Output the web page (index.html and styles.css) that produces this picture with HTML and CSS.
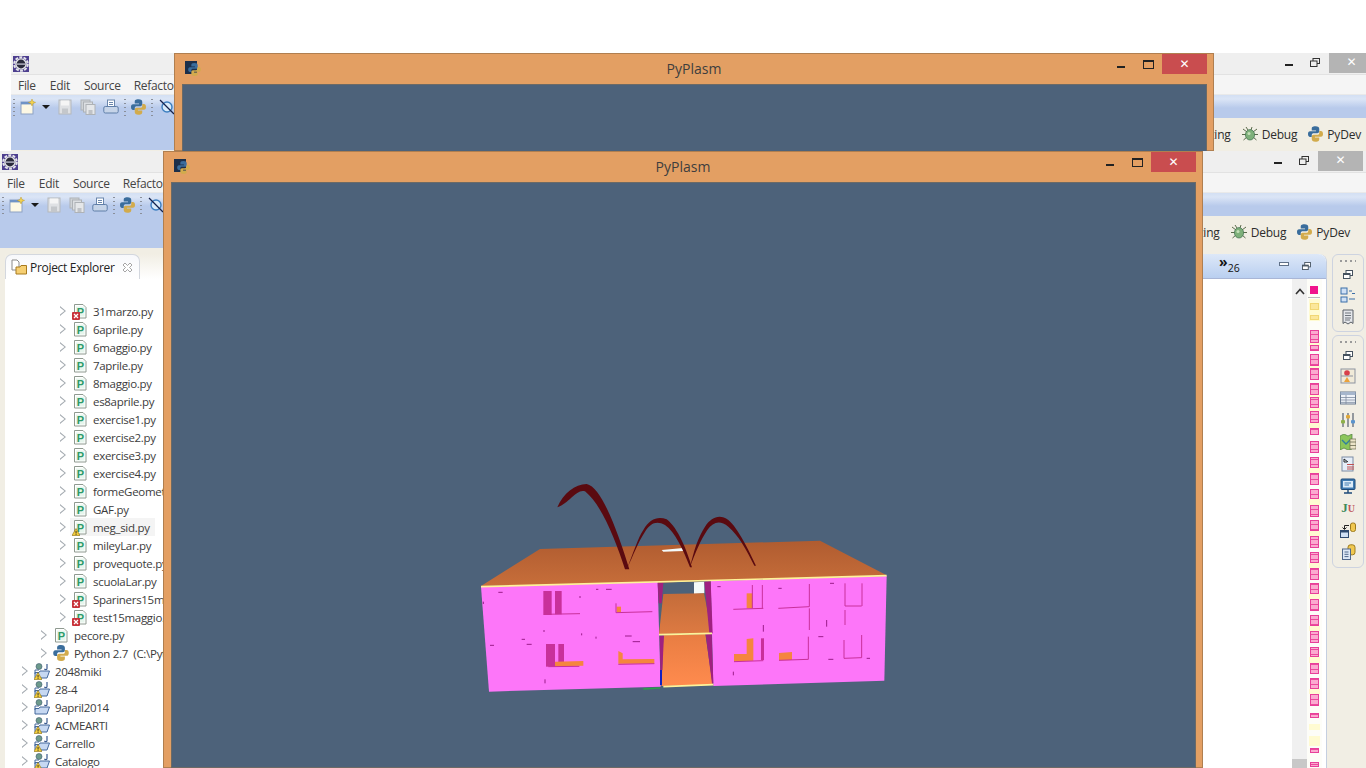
FILE: index.html
```html
<!DOCTYPE html>
<html lang="en">
<head>
<meta charset="utf-8">
<title>PyPlasm</title>
<link rel="stylesheet" href="styles.css">
</head>
<body>
<svg class="defs" width="0" height="0" aria-hidden="true">
  <defs>
    <symbol id="gear" viewBox="0 0 16 16">
      <rect width="16" height="16" fill="#4d3f8f"/>
      <circle cx="8" cy="8" r="6.800" fill="none" stroke="#e4e4ea" stroke-width="2" stroke-dasharray="3 1.300"/>
      <circle cx="8" cy="8" r="5.800" fill="#e6e6ea"/>
      <circle cx="8" cy="8" r="4.400" fill="#2a2a3c"/>
      <rect x="3.600" y="7.400" width="8.800" height="1.400" fill="#b9b9c8"/>
    </symbol>
    <symbol id="py" viewBox="1 1 14 14.4">
      <path fill="#3a6d9c" d="M8 1C5 1 4.500 2 4.500 3.500V5H8.500V5.700H3C1.500 5.700 1 7 1 8.300 1 9.800 1.600 11 3 11H4.500V9.200C4.500 8 5.400 7.500 6.300 7.500H9.700C10.800 7.500 11.500 6.700 11.500 5.700V3.500C11.500 2 10.500 1 8 1Z"/>
      <path fill="#d2ab4c" transform="rotate(180 8 8.2)" d="M8 1C5 1 4.500 2 4.500 3.500V5H8.500V5.700H3C1.500 5.700 1 7 1 8.300 1 9.800 1.600 11 3 11H4.500V9.200C4.500 8 5.400 7.500 6.300 7.500H9.700C10.800 7.500 11.500 6.700 11.500 5.700V3.500C11.500 2 10.500 1 8 1Z"/>
    </symbol>
    <symbol id="plasmico" viewBox="0 0 16 16">
      <rect x="0" y="0" width="12" height="13" fill="#1c2f4a"/>
      <use href="#py" x="3" y="2" width="13" height="13"/>
    </symbol>
    <symbol id="pyfile" viewBox="0 0 16 16">
      <path d="M2.500 1.500H11L14 4.500V15H2.500Z" fill="#fff" stroke="#8f9a90"/>
      <rect x="4" y="3.500" width="8.500" height="10" fill="#e6f5ec"/>
      <text x="8.200" y="12.500" text-anchor="middle" class="pchar">P</text>
    </symbol>
    <symbol id="err" viewBox="0 0 8 8">
      <rect width="8" height="8" rx="1" fill="#c8323a"/>
      <path d="M2 2L6 6M6 2L2 6" stroke="#fff" stroke-width="1.300"/>
    </symbol>
    <symbol id="warn" viewBox="0 0 8 8">
      <path d="M4 .5L8 7.500H0Z" fill="#f5cf3a" stroke="#8a6d10" stroke-width=".6"/>
      <rect x="3.600" y="3" width=".9" height="2.400" fill="#222"/>
      <rect x="3.600" y="5.900" width=".9" height=".9" fill="#222"/>
    </symbol>
    <symbol id="project" viewBox="0 0 16 16">
      <path d="M1 9.500H5L6 8H15.500L13 15H1Z" fill="#c6d8f2" stroke="#45699c"/>
      <path d="M1 11V7H5" fill="none" stroke="#45699c"/>
      <circle cx="5" cy="3.500" r="3" fill="#6d9a8c" stroke="#3c5a70" stroke-width=".6"/>
      <path d="M13 1V5.500C13 7 11 7 10.500 5.800" fill="none" stroke="#3a5a90" stroke-width="1.200"/>
    </symbol>
    <symbol id="newf" viewBox="0 0 16 16">
      <rect x="1" y="3" width="12" height="12" fill="#fdf8e4" stroke="#8da2c4"/>
      <rect x="1" y="3" width="12" height="2.400" fill="#6f93c6"/>
      <path d="M12 0L13 2.500 15.600 3.400 13 4.400 12 7 11 4.400 8.400 3.400 11 2.500Z" fill="#f4d34e" stroke="#b78e1a" stroke-width=".4"/>
    </symbol>
    <symbol id="save" viewBox="0 0 16 16">
      <rect x="2" y="1" width="12" height="14" fill="#dfe1e4" stroke="#b4b7bb"/>
      <rect x="4" y="1.500" width="8" height="5" fill="#f5f5f5"/>
      <rect x="5" y="9.500" width="6" height="5.500" fill="#c4c7cb"/>
    </symbol>
    <symbol id="saveall" viewBox="0 0 16 16">
      <rect x="1" y="1" width="9" height="10" fill="#cfd3d7" stroke="#aeb2b6"/>
      <rect x="3.500" y="3" width="9" height="10" fill="#dcdfe2" stroke="#aeb2b6"/>
      <rect x="6" y="5.500" width="9" height="10" fill="#e5e7e9" stroke="#aeb2b6"/>
      <rect x="8.500" y="11" width="4" height="4" fill="#bfc2c6"/>
    </symbol>
    <symbol id="print" viewBox="0 0 16 16">
      <rect x="4.500" y="1" width="7" height="7" fill="#fff" stroke="#6a86ac"/>
      <path d="M6 3.500H10M6 5.500H10" stroke="#6a86ac"/>
      <rect x=".8" y="7.500" width="14.400" height="6.500" rx="1.500" fill="#c6d4e8" stroke="#5f7ea8"/>
    </symbol>
    <symbol id="skip" viewBox="0 0 16 16">
      <circle cx="8" cy="8" r="5" fill="#d8ebfa" stroke="#3d7fc0" stroke-width="1.400"/>
      <path d="M1 1L15 15" stroke="#14214a" stroke-width="1.300"/>
    </symbol>
    <symbol id="bug" viewBox="0 0 16 16">
      <path d="M1 3L5 6M15 3L11 6M0 8.500H4M16 8.500H12M1.500 14L5 11M14.500 14L11 11M4 1L6 4M10 1L9 4" stroke="#5a6a4a"/>
      <ellipse cx="8" cy="8.800" rx="4.600" ry="5.200" fill="#7eb07a" stroke="#3f6e4f" stroke-width=".7"/>
      <circle cx="7" cy="7.500" r="1.500" fill="#c4e0b8"/>
    </symbol>
    <symbol id="restore" viewBox="0 0 10 9">
      <rect x="3" y=".5" width="6.500" height="5" fill="#fff" stroke="#45525f"/>
      <rect x=".5" y="3.500" width="6.500" height="5" fill="#fff" stroke="#45525f"/>
      <rect x=".5" y="3.500" width="6.500" height="1.500" fill="#45525f"/>
    </symbol>
    <symbol id="outline" viewBox="0 0 16 16">
      <rect x="1" y="1" width="6" height="6" fill="#cfe0f5" stroke="#3b6fa8"/>
      <rect x="1" y="10" width="6" height="5" fill="#cfe0f5" stroke="#3b6fa8"/>
      <path d="M9 4H12M9 12H15M12 6.500H15" stroke="#3b6fa8" stroke-width="1.200"/>
    </symbol>
    <symbol id="doc" viewBox="0 0 16 16">
      <path d="M3 1H13V14.500L11 13 8 15 5 13 3 14.500Z" fill="#e4e6ea" stroke="#5b6168"/>
      <path d="M5 4H11M5 6.500H11M5 9H11M5 11H10" stroke="#6e757d"/>
    </symbol>
    <symbol id="bp" viewBox="0 0 16 16">
      <rect x="1" y="1" width="14" height="14" fill="#f0ead8" stroke="#8d93a0"/>
      <circle cx="7" cy="5" r="2.800" fill="#d8404a"/>
      <path d="M7 9L10 14H4Z" fill="#eba23c"/>
      <path d="M1 8H13" stroke="#8d93a0"/>
    </symbol>
    <symbol id="table" viewBox="0 0 16 16">
      <rect x=".5" y="2" width="15" height="12" fill="#eef2f8" stroke="#6b7b90"/>
      <rect x=".5" y="2" width="15" height="3" fill="#a6b6cc"/>
      <path d="M1 7.500H15M1 10H15M1 12.400H15M6 5V14" stroke="#7d8ca0" stroke-width=".8"/>
    </symbol>
    <symbol id="sliders" viewBox="0 0 16 16">
      <path d="M3 1V15M8 1V15M13 1V15" stroke="#556070" stroke-width="1.200"/>
      <rect x="1" y="8" width="4" height="3.400" rx="1" fill="#8eb04a"/>
      <rect x="6" y="3" width="4" height="3.400" rx="1" fill="#e0a83a"/>
      <rect x="11" y="8" width="4" height="3.400" rx="1" fill="#5b94cc"/>
    </symbol>
    <symbol id="map" viewBox="0 0 16 16">
      <path d="M0 2L4 0 8 2 12 0V15L8 16 4 14 0 16Z" fill="#8cc65a" stroke="#4c7a3c" stroke-width=".7"/>
      <path d="M2 6L6 10 10 6" stroke="#2f7fa0" fill="none" stroke-width="1.400"/>
      <rect x="10" y="5" width="6" height="10" fill="#ece4c8" stroke="#6a6a50" stroke-width=".7"/>
      <path d="M10 8H16M10 11.500H16" stroke="#6a6a50" stroke-width=".8"/>
    </symbol>
    <symbol id="hier" viewBox="0 0 16 16">
      <rect x="2" y="1" width="11" height="14" fill="#e6eef8" stroke="#7c8ca4"/>
      <path d="M4 3L8 6M4 3V6H7" stroke="#222" fill="none"/>
      <path d="M7 8.500H14M7 11H14M7 13H14" stroke="#c05050"/>
    </symbol>
    <symbol id="monitor" viewBox="0 0 16 16">
      <rect x="1" y="1" width="14" height="10.500" rx="1" fill="#3f7ab0" stroke="#1d4a78"/>
      <rect x="3" y="3" width="10" height="6.500" fill="#dcecf8"/>
      <path d="M4.500 5H11M4.500 7H9" stroke="#3f7ab0"/>
      <path d="M4 15H12M8 11.500V15" stroke="#1d4a78" stroke-width="1.400"/>
    </symbol>
    <symbol id="dbarrow" viewBox="0 0 16 16">
      <rect x="10.500" y="1" width="5" height="8.500" rx="2" fill="#f0c850" stroke="#9c7a1c"/>
      <path d="M9 3.500H4.500V7M2.500 5.500L4.500 7.500 6.500 5.500" stroke="#222" fill="none"/>
      <rect x=".5" y="8.500" width="8" height="7" fill="#cfe0f5" stroke="#2e4a70"/>
      <rect x=".5" y="8.500" width="8" height="2" fill="#2e4a70"/>
    </symbol>
    <symbol id="dbdoc" viewBox="0 0 16 16">
      <rect x="8" y=".8" width="7" height="10" rx="2.500" fill="#f0c850" stroke="#9c7a1c"/>
      <rect x="2.500" y="5" width="8" height="10.500" fill="#dde8f6" stroke="#50688c"/>
      <path d="M4.500 8H8.500M4.500 10.300H8.500M4.500 12.600H8.500" stroke="#50688c"/>
    </symbol>
    <pattern id="stripes" width="4" height="5" patternUnits="userSpaceOnUse">
      <rect width="4" height="5" fill="#fbaacf"/>
      <rect y="4" width="4" height="1" fill="#ec4a9d"/>
    </pattern>
  </defs>
</svg>

<section class="eclipse eclipse-back">
  <header class="ec-title">
    <svg class="ec-logo"><use href="#gear"/></svg>
    <span class="ec-min"></span>
    <svg class="ec-restore" viewBox="0 0 10 9"><rect x="3" y=".5" width="6.500" height="5" fill="none" stroke="#333"/><rect x=".5" y="3" width="6.500" height="5.500" fill="#efefef" stroke="#333"/></svg>
    <span class="ec-close">✕</span>
  </header>
  <nav class="ec-menu"><span>File</span><span>Edit</span><span>Source</span><span>Refactor</span></nav>
  <div class="ec-tools">
    <div class="tool-left">
      <i class="grip"></i>
      <svg class="ti first"><use href="#newf"/></svg><i class="caret"></i>
      <svg class="ti s1"><use href="#save"/></svg><svg class="ti s2"><use href="#saveall"/></svg><svg class="ti s2"><use href="#print"/></svg>
      <i class="grip g2"></i><svg class="ti s3 tpy"><use href="#py"/></svg><i class="grip g3"></i><svg class="ti s4"><use href="#skip"/></svg>
    </div>
    <div class="tool-right">
      <div class="stripe"></div>
      <div class="persp">
        <span class="p-hidden">Team Synchronizing</span>
        <svg class="pi"><use href="#bug"/></svg><span class="p-name">Debug</span>
        <svg class="pi ppy"><use href="#py"/></svg><span class="p-name">PyDev</span>
      </div>
    </div>
  </div>
</section>

<section class="plasm plasm-back">
  <header class="pl-title">
    <svg class="pl-ico"><use href="#plasmico"/></svg>
    <span class="pl-name">PyPlasm</span>
    <span class="pl-min"></span><span class="pl-max"></span><span class="pl-close">✕</span>
  </header>
  <div class="pl-canvas"></div>
</section>

<section class="eclipse eclipse-front">
  <header class="ec-title">
    <svg class="ec-logo"><use href="#gear"/></svg>
    <span class="ec-min"></span>
    <svg class="ec-restore" viewBox="0 0 10 9"><rect x="3" y=".5" width="6.500" height="5" fill="none" stroke="#333"/><rect x=".5" y="3" width="6.500" height="5.500" fill="#efefef" stroke="#333"/></svg>
    <span class="ec-close">✕</span>
  </header>
  <nav class="ec-menu"><span>File</span><span>Edit</span><span>Source</span><span>Refactor</span></nav>
  <div class="ec-tools">
    <div class="tool-left">
      <i class="grip"></i>
      <svg class="ti first"><use href="#newf"/></svg><i class="caret"></i>
      <svg class="ti s1"><use href="#save"/></svg><svg class="ti s2"><use href="#saveall"/></svg><svg class="ti s2"><use href="#print"/></svg>
      <i class="grip g2"></i><svg class="ti s3 tpy"><use href="#py"/></svg><i class="grip g3"></i><svg class="ti s4"><use href="#skip"/></svg>
    </div>
    <div class="tool-right">
      <div class="stripe"></div>
      <div class="persp">
        <span class="p-hidden">Team Synchronizing</span>
        <svg class="pi"><use href="#bug"/></svg><span class="p-name">Debug</span>
        <svg class="pi ppy"><use href="#py"/></svg><span class="p-name">PyDev</span>
      </div>
    </div>
  </div>
  <div class="workbench">
    <div class="explorer">
      <div class="ex-head">
        <div class="ex-tab">
          <svg class="tab-ico" viewBox="0 0 16 16"><path d="M1 1H6L8 3V11H1Z" fill="#fff" stroke="#8a8a8a"/><path d="M5 8H9L10 6.500H15.500V15H5Z" fill="#f6cf72" stroke="#a77a1e"/></svg>
          <span>Project Explorer</span>
          <svg class="tab-x" viewBox="0 0 11 11"><path d="M1 3L3 1 5.500 3.500 8 1 10 3 7.500 5.500 10 8 8 10 5.500 7.500 3 10 1 8 3.500 5.500Z" fill="#fff" stroke="#8f8f8f" stroke-width=".8"/></svg>
        </div>
      </div>
      <ul class="tree">
        <li class="row l3"><i class="arrow"></i><span class="ic"><svg><use href="#pyfile"/></svg><svg class="badge"><use href="#err"/></svg></span><span>31marzo.py</span></li>
        <li class="row l3"><i class="arrow"></i><span class="ic"><svg><use href="#pyfile"/></svg></span><span>6aprile.py</span></li>
        <li class="row l3"><i class="arrow"></i><span class="ic"><svg><use href="#pyfile"/></svg></span><span>6maggio.py</span></li>
        <li class="row l3"><i class="arrow"></i><span class="ic"><svg><use href="#pyfile"/></svg></span><span>7aprile.py</span></li>
        <li class="row l3"><i class="arrow"></i><span class="ic"><svg><use href="#pyfile"/></svg></span><span>8maggio.py</span></li>
        <li class="row l3"><i class="arrow"></i><span class="ic"><svg><use href="#pyfile"/></svg></span><span>es8aprile.py</span></li>
        <li class="row l3"><i class="arrow"></i><span class="ic"><svg><use href="#pyfile"/></svg></span><span>exercise1.py</span></li>
        <li class="row l3"><i class="arrow"></i><span class="ic"><svg><use href="#pyfile"/></svg></span><span>exercise2.py</span></li>
        <li class="row l3"><i class="arrow"></i><span class="ic"><svg><use href="#pyfile"/></svg></span><span>exercise3.py</span></li>
        <li class="row l3"><i class="arrow"></i><span class="ic"><svg><use href="#pyfile"/></svg></span><span>exercise4.py</span></li>
        <li class="row l3"><i class="arrow"></i><span class="ic"><svg><use href="#pyfile"/></svg></span><span>formeGeometriche.py</span></li>
        <li class="row l3"><i class="arrow"></i><span class="ic"><svg><use href="#pyfile"/></svg></span><span>GAF.py</span></li>
        <li class="row l3 sel"><i class="arrow"></i><span class="ic"><svg><use href="#pyfile"/></svg><svg class="badge"><use href="#warn"/></svg></span><span>meg_sid.py</span></li>
        <li class="row l3"><i class="arrow"></i><span class="ic"><svg><use href="#pyfile"/></svg></span><span>mileyLar.py</span></li>
        <li class="row l3"><i class="arrow"></i><span class="ic"><svg><use href="#pyfile"/></svg></span><span>provequote.py</span></li>
        <li class="row l3"><i class="arrow"></i><span class="ic"><svg><use href="#pyfile"/></svg></span><span>scuolaLar.py</span></li>
        <li class="row l3"><i class="arrow"></i><span class="ic"><svg><use href="#pyfile"/></svg><svg class="badge"><use href="#err"/></svg></span><span>Spariners15maggio.py</span></li>
        <li class="row l3"><i class="arrow"></i><span class="ic"><svg><use href="#pyfile"/></svg><svg class="badge"><use href="#err"/></svg></span><span>test15maggio.py</span></li>
        <li class="row l2"><i class="arrow"></i><span class="ic"><svg><use href="#pyfile"/></svg></span><span>pecore.py</span></li>
        <li class="row l2"><i class="arrow"></i><span class="ic"><svg><use href="#py"/></svg></span><span>Python 2.7  (C:\Python27\python.exe)</span></li>
        <li class="row l1"><i class="arrow"></i><span class="ic"><svg><use href="#project"/></svg><svg class="badge"><use href="#warn"/></svg></span><span>2048miki</span></li>
        <li class="row l1"><i class="arrow"></i><span class="ic"><svg><use href="#project"/></svg><svg class="badge"><use href="#warn"/></svg></span><span>28-4</span></li>
        <li class="row l1"><i class="arrow"></i><span class="ic"><svg><use href="#project"/></svg></span><span>9april2014</span></li>
        <li class="row l1"><i class="arrow"></i><span class="ic"><svg><use href="#project"/></svg><svg class="badge"><use href="#warn"/></svg></span><span>ACMEARTI</span></li>
        <li class="row l1"><i class="arrow"></i><span class="ic"><svg><use href="#project"/></svg><svg class="badge"><use href="#warn"/></svg></span><span>Carrello</span></li>
        <li class="row l1"><i class="arrow"></i><span class="ic"><svg><use href="#project"/></svg><svg class="badge"><use href="#warn"/></svg></span><span>Catalogo</span></li>
      </ul>
    </div>
    <div class="editor">
      <div class="ed-head">
        <span class="more"><b>»</b><sub>26</sub></span>
        <i class="ed-min"></i>
        <svg class="ed-restore"><use href="#restore"/></svg>
      </div>
      <div class="ed-body">
        <div class="ed-text"></div>
        <svg class="ruler" viewBox="1292 279 30 489">
          <rect x="1292" y="279" width="15" height="489" fill="#f0f0f0"/>
          <rect x="1307" y="279" width="15" height="489" fill="#fdfdf8"/>
          <path d="M1296 294L1300 289.500 1304 294" fill="none" stroke="#333" stroke-width="1.600"/>
          <rect x="1310" y="286" width="8" height="8" fill="#f0148c"/>
          <rect x="1308" y="297" width="12" height="1" fill="#bbb"/>
          <g class="pale">
            <rect x="1309" y="299" width="11" height="22"/><rect x="1309" y="343" width="11" height="3"/><rect x="1309" y="366" width="11" height="2"/><rect x="1309" y="395" width="11" height="3"/><rect x="1309" y="408" width="11" height="3"/><rect x="1309" y="423" width="11" height="5"/><rect x="1309" y="468" width="11" height="5"/><rect x="1309" y="499" width="11" height="6"/><rect x="1309" y="531" width="11" height="5"/><rect x="1309" y="563" width="11" height="5"/><rect x="1309" y="594" width="11" height="5"/><rect x="1309" y="626" width="11" height="5"/><rect x="1309" y="657" width="11" height="6"/><rect x="1309" y="689" width="11" height="5"/><rect x="1309" y="724" width="11" height="6"/><rect x="1309" y="736" width="11" height="10"/>
          </g>
          <rect class="yel" x="1310.500" y="303.500" width="8" height="6"/>
          <rect class="yel" x="1310.500" y="315.500" width="8" height="4"/>
          <g class="mark">
            <rect x="1310.500" y="330.500" width="8" height="12"/><rect x="1310.500" y="345.500" width="8" height="5"/><rect x="1310.500" y="354.500" width="8" height="11"/><rect x="1310.500" y="368.500" width="8" height="11"/><rect x="1310.500" y="383.500" width="8" height="11"/><rect x="1310.500" y="397.500" width="8" height="10"/><rect x="1310.500" y="411.500" width="8" height="11"/><rect x="1310.500" y="428.500" width="8" height="6"/><rect x="1310.500" y="441.500" width="8" height="11"/><rect x="1310.500" y="457.500" width="8" height="10"/><rect x="1310.500" y="473.500" width="8" height="11"/><rect x="1310.500" y="489.500" width="8" height="9"/><rect x="1310.500" y="505.500" width="8" height="11"/><rect x="1310.500" y="520.500" width="8" height="10"/><rect x="1310.500" y="536.500" width="8" height="11"/><rect x="1310.500" y="552.500" width="8" height="10"/><rect x="1310.500" y="568.500" width="8" height="11"/><rect x="1310.500" y="583.500" width="8" height="10"/><rect x="1310.500" y="599.500" width="8" height="11"/><rect x="1310.500" y="615.500" width="8" height="10"/><rect x="1310.500" y="631.500" width="8" height="11"/><rect x="1310.500" y="647.500" width="8" height="9"/><rect x="1310.500" y="663.500" width="8" height="10"/><rect x="1310.500" y="678.500" width="8" height="10"/><rect x="1310.500" y="694.500" width="8" height="11"/><rect x="1310.500" y="713.500" width="8" height="4"/><rect x="1310.500" y="748.500" width="8" height="4"/><rect x="1310.500" y="762.500" width="8" height="4"/>
          </g>
          <rect x="1292" y="759" width="15" height="9" fill="#c8c8c8"/>
        </svg>
      </div>
    </div>
    <aside class="trim">
      <div class="trim-box">
        <i class="dots"></i>
        <svg class="restore-sm"><use href="#restore"/></svg>
        <svg class="tr"><use href="#outline"/></svg>
        <svg class="tr"><use href="#doc"/></svg>
      </div>
      <div class="trim-box">
        <i class="dots"></i>
        <svg class="restore-sm"><use href="#restore"/></svg>
        <svg class="tr"><use href="#bp"/></svg>
        <svg class="tr"><use href="#table"/></svg>
        <svg class="tr"><use href="#sliders"/></svg>
        <svg class="tr"><use href="#map"/></svg>
        <svg class="tr"><use href="#hier"/></svg>
        <svg class="tr"><use href="#monitor"/></svg>
        <span class="tr junit">J<em>U</em></span>
        <svg class="tr"><use href="#dbarrow"/></svg>
        <svg class="tr"><use href="#dbdoc"/></svg>
      </div>
    </aside>
  </div>
</section>

<section class="plasm plasm-front">
  <header class="pl-title">
    <svg class="pl-ico"><use href="#plasmico"/></svg>
    <span class="pl-name">PyPlasm</span>
    <span class="pl-min"></span><span class="pl-max"></span><span class="pl-close">✕</span>
  </header>
  <div class="pl-canvas">
    <svg class="scene" viewBox="0 0 1290 690">
      <defs>
        <linearGradient id="roof" x1="0" y1="0" x2="0" y2="1"><stop offset="0" stop-color="#b05c30"/><stop offset="1" stop-color="#c76e3a"/></linearGradient>
        <linearGradient id="floor1" x1="0" y1="0" x2="0" y2="1"><stop offset="0" stop-color="#c46c3a"/><stop offset="1" stop-color="#dd7a42"/></linearGradient>
        <linearGradient id="floor2" x1="0" y1="0" x2="0" y2="1"><stop offset="0" stop-color="#e87d42"/><stop offset="1" stop-color="#ff8b4e"/></linearGradient>
      </defs>
      <polygon points="33,348 210,237 1050,212 1250,316 722,332 565,338" fill="url(#roof)"/>
      <polygon points="575,240 640,234 642,243 580,245" fill="#f4fafa"/>
      <polygon points="33,350 563,336 572,650 57,665" fill="#fd76f9"/>
      <polygon points="722,333 1250,318 1243,632 730,648" fill="#fd76f9"/>
      <polygon points="672,337 703,335 703,370 672,372" fill="#f4fafa"/>
      <polygon points="580,372 702,370 726,490 567,492" fill="url(#floor1)"/>
      <polygon points="580,496 706,492 728,645 575,648" fill="url(#floor2)"/>
      <polygon points="563,338 580,338 575,400 566,400" fill="#a02080"/>
      <polygon points="703,335 722,333 728,490 718,490" fill="#a02080"/>
      <polygon points="569,497 582,496 577,600 571,600" fill="#a02080"/>
      <polygon points="707,492 725,490 730,640 726,640" fill="#a02080"/>
      <rect x="570" y="600" width="6" height="45" fill="#1420c0"/>
      <path d="M33 350L1250 317" stroke="#fdf39a" stroke-width="5"/>
      <path d="M567 494L726 490M580 650L730 644" stroke="#fdf39a" stroke-width="5"/>
      <path d="M520 657L570 654" stroke="#2ea048" stroke-width="4"/>
      <g class="room">
        <rect x="220" y="363" width="25" height="72"/><rect x="255" y="363" width="20" height="70"/>
        <rect x="228" y="522" width="27" height="68"/><rect x="265" y="522" width="17" height="63"/>
        <polygon points="873,505 882,505 882,570 873,570"/>
      </g>
      <g class="orange">
        <rect x="440" y="410" width="13" height="17"/>
        <rect x="830" y="370" width="18" height="45"/>
        <polygon points="255,575 340,573 340,587 255,589"/>
        <polygon points="445,543 458,550 458,568 553,567 553,581 445,581"/>
        <polygon points="830,507 850,505 850,572 792,574 792,552 830,552"/>
        <polygon points="927,549 966,546 966,570 927,571"/>
      </g>
      <path class="line" d="M222 433L330 431M438 400V428L547 425M790 418L880 415M847 345V415M877 345V415M925 415L1018 410M1018 342V410M1125 340V408L1175 408M1176 340V408M792 575L880 572M927 571L1015 568M1015 500V568M1122 510V565L1175 563M1175 495V563M235 590L328 589M445 583L553 581M1018 415V480M1125 420V465"/>
      <path class="specks" d="M85 367H98M155 508H165M170 523H185M60 526H72M465 498H485M488 515H510M408 358H425M330 378V384M378 358H385M40 395V402M225 628V640M790 605V616M880 465V485M1070 450V470M1045 500H1060M1075 568H1090M1190 565H1200M1080 340H1092M742 350H752M925 355H935M335 490V496M378 500V506M222 480V486"/>
      <g class="arch">
        <path d="M262 112C280 70 315 42 350 42 395 50 445 190 478 298L465 298C435 205 395 105 345 64 320 55 300 98 262 112Z"/>
        <path d="M470 298C490 250 505 200 520 180 540 145 565 138 590 148 625 175 650 240 666 292L660 292C640 240 615 185 585 165 560 150 540 160 525 185 505 215 490 255 470 298Z"/>
        <path d="M660 292C672 240 685 200 705 170 725 140 750 132 775 150 805 175 838 245 858 287L853 287C830 240 805 195 775 170 750 150 730 155 712 180 692 210 675 250 660 292Z"/>
      </g>
    </svg>
  </div>
</section>
</body>
</html>
```

FILE: styles.css
```css
* { box-sizing: border-box; }
html, body { margin: 0; padding: 0; }
body {
  position: relative;
  width: 1366px;
  height: 768px;
  overflow: hidden;
  background: #fff;
  font-family: "Open Sans", "Noto Sans", sans-serif;
  font-size: 11.5px;
  letter-spacing: -.3px;
  color: #333;
}
.defs { position: absolute; }
i { display: block; font-style: normal; }
svg { display: block; }

/* desktop windows */
.eclipse { position: absolute; width: 1366px; height: 617px; background: #f1eee4; }
.eclipse-back { left: 11px; top: 53px; height: 98px; }
.eclipse-front { left: 0; top: 151px; }
.plasm { position: absolute; width: 1040px; background: #e39f63; box-shadow: inset 0 0 0 1px #b07f50; }
.plasm-back { left: 174px; top: 53px; height: 98px; }
.plasm-front { left: 163px; top: 151px; height: 617px; }

/* eclipse chrome */
.ec-title { display: flex; align-items: flex-start; height: 22px; background: #efefef; border-bottom: 1px solid #e2e2e2; }
.ec-logo { width: 16px; height: 16px; margin: 3px 0 0 2px; }
.ec-min { width: 8px; height: 2px; background: #222; margin: 11px 0 0 auto; }
.ec-restore { width: 10px; height: 9px; margin: 5px 0 0 17px; }
.ec-close { width: 45px; height: 20px; margin: 0 3px 0 9px; background: #b4b4b4; color: #fff; font-size: 12px; line-height: 19px; text-align: center; font-family: "DejaVu Sans", sans-serif; }
.ec-menu { display: flex; height: 20px; padding: 1px 0 0 7px; background: #f5f5f5; border-bottom: 1px solid #e9e9e9; font-size: 12px; line-height: 20px; color: #444; white-space: nowrap; }
.ec-menu span { margin-right: 14px; }
.ec-menu span:nth-child(3) { margin-right: 13px; }
.ec-tools { display: flex; height: 55px; }
.tool-left { display: flex; align-items: flex-start; width: 600px; padding-top: 4px; background: linear-gradient(#d3dff3 0, #dbe5f6 4px, #b8caeb 13px); }
.tool-right { flex: 1; display: flex; flex-direction: column; }
.stripe { height: 23px; background: linear-gradient(#d3dff3 0, #dbe5f6 4px, #b8caeb 13px); }
.persp { flex: 1; display: flex; justify-content: flex-end; align-items: center; gap: 4px; padding-right: 16px; background: #f1eee4; font-size: 12px; color: #2c2c2c; white-space: nowrap; letter-spacing: -.2px; }
.pi { width: 16px; height: 16px; margin-left: 7px; }
.ppy { width: 15px; }
.grip { width: 2px; height: 17px; margin: 0 0 0 2px; background: repeating-linear-gradient(#8a8f9a 0 1px, transparent 1px 4px); }
.ti { width: 16px; height: 16px; }
.ti.first { margin-left: 5px; }
.caret { width: 0; height: 0; margin: 6px 0 0 6px; border: 4px solid transparent; border-top: 4px solid #1a1a1a; border-bottom: 0; }
.s1 { margin-left: 7px; }
.s2 { margin-left: 7px; }
.g2 { margin-left: 5px; }
.s3 { margin-left: 5px; }
.tpy { width: 15px; }
.g3 { margin-left: 5px; }
.s4 { margin-left: 6px; }

/* workbench */
.workbench { display: flex; height: 520px; padding: 6px 2px 0 5px; background: #f1eee4; }
.explorer { width: 600px; background: #fff; overflow: hidden; }
.ex-head { height: 25px; background: linear-gradient(#f1eee4, #fff); }
.ex-tab { display: flex; align-items: center; width: 135px; height: 25px; background: linear-gradient(#f7f8fb, #fff); border: 1px solid #d3d7de; border-bottom: 0; border-radius: 7px 7px 0 0; padding-left: 5px; font-size: 12px; color: #222; white-space: nowrap; }
.tab-ico { width: 16px; height: 16px; margin-right: 3px; }
.tab-x { width: 11px; height: 11px; margin-left: 7px; }
.tree { list-style: none; margin: 23px 0 0; padding: 0; }
.row { display: flex; align-items: center; height: 18px; white-space: pre; color: #3c3c3c; }
.l1 { padding-left: 17px; }
.l2 { padding-left: 36px; }
.l3 { padding-left: 55px; }
.arrow { width: 6px; height: 10px; margin-right: 6px; background: #a6acb2; clip-path: polygon(0 0, 100% 50%, 0 100%, 0 86%, 74% 50%, 0 14%); }
.ic { position: relative; width: 16px; height: 16px; margin-right: 5px; flex: none; }
.ic svg { width: 16px; height: 16px; }
.ic .badge { position: absolute; left: 0; bottom: -1px; width: 8px; height: 8px; }
.sel { background: linear-gradient(90deg, transparent 65px, #f4f4f4 65px, #f4f4f4 150px, transparent 150px); }
.pchar { font: bold 11px "Liberation Sans", sans-serif; fill: #2e9a68; }

/* editor */
.editor { flex: 1; display: flex; flex-direction: column; margin-left: 598px; border-right: 1px solid #c5cfe0; background: #fff; border-top-right-radius: 8px; }
.ed-head { display: flex; align-items: flex-start; height: 25px; background: linear-gradient(#dde8f8, #b9cff0); border-bottom: 1px solid #a9b6d6; border-top-right-radius: 8px; flex: none; }
.more { margin: 1px 0 0 16px; display: flex; color: #111; font-size: 12px; line-height: 16px; letter-spacing: 0; }
.more b { font-size: 14px; line-height: 14px; }
.more sub { font-size: 10.500px; line-height: 10px; margin-top: 8px; vertical-align: baseline; }
.ed-min { width: 10px; height: 4px; margin: 8px 0 0 auto; background: #fdfdfd; border: 1px solid #5f7088; }
.ed-restore { width: 9px; height: 8px; margin: 8px 15px 0 13px; }
.ed-body { flex: 1; display: flex; padding-right: 4px; }
.ed-text { flex: 1; background: #fff; }
.ruler { width: 30px; height: 489px; }
.pale { fill: #fffbd2; }
.yel { fill: #fbe79a; stroke: #f1d774; stroke-width: 1; }
.mark rect { fill: url(#stripes); stroke: #e8409a; stroke-width: 1; }

/* trim stacks */
.trim { width: 32px; margin-left: 5px; display: flex; flex-direction: column; gap: 3px; }
.trim-box { display: flex; flex-direction: column; align-items: center; padding-top: 5px; gap: 6px; border: 1px solid #cdd3e0; border-radius: 6px; }
.trim-box:first-child { height: 78px; }
.trim-box:last-child { height: 233px; }
.dots { width: 16px; height: 2px; background: repeating-linear-gradient(90deg, #9a9a9a 0 2px, transparent 2px 5px); }
.restore-sm { width: 10px; height: 9px; margin: 2px 0; }
.tr { width: 16px; height: 16px; flex: none; }
.junit { display: block; font: bold 13px/16px "Liberation Serif", serif; color: #3f8a5a; text-align: center; white-space: nowrap; letter-spacing: 0; }
.junit em { font-style: normal; color: #c05a60; font-size: 10px; }

/* PyPlasm */
.pl-title { display: flex; align-items: flex-start; height: 31px; color: #444; position: relative; }
.pl-ico { width: 16px; height: 16px; margin: 8px 0 0 11px; }
.pl-name { position: absolute; left: 0; right: 0; top: 6px; text-align: center; font-size: 14px; line-height: 20px; color: #3e3e3e; letter-spacing: 0; }
.pl-min { width: 8px; height: 2px; margin: 13px 0 0 auto; background: #222; }
.pl-max { width: 11px; height: 9px; margin: 7px 0 0 18px; border: 1px solid #222; border-top-width: 2px; }
.pl-close { width: 45px; height: 20px; margin: 1px 7px 0 8px; background: #c94d4f; color: #fff; font-family: "DejaVu Sans", sans-serif; font-size: 12px; line-height: 20px; text-align: center; }
.pl-canvas { height: 586px; margin: 0 7px 0 8px; padding: 288px 0 0 299px; background: #4d627a; box-shadow: inset 0 0 0 1px #6c6a66; overflow: hidden; }
.scene { width: 430px; height: 230px; }
.room { fill: #c8309a; }
.orange { fill: #f5853e; }
.line { fill: none; stroke: #c8309a; stroke-width: 3; }
.specks { fill: none; stroke: #9a1c8a; stroke-width: 3; }
.arch { fill: #5a0a10; }
```
